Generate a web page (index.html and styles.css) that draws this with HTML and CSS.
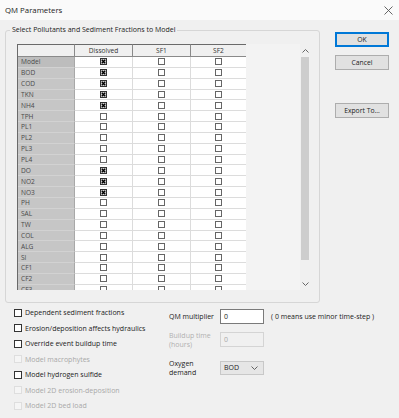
FILE: index.html
```html
<!DOCTYPE html>
<html>
<head>
<meta charset="utf-8">
<link rel="stylesheet" href="styles.css">
</head>
<body>
<div class="window">
  <div class="titlebar">
    <span class="title">QM Parameters</span>
    <svg class="close" width="9" height="9" viewBox="0 0 9 9"><path d="M0.5 0.5 L8.5 8.5 M8.5 0.5 L0.5 8.5" stroke="#555" stroke-width="0.9" fill="none"/></svg>
  </div>
  <div class="top">
    <fieldset class="group">
      <legend>Select Pollutants and Sediment Fractions to Model</legend>
      <div class="gridwrap">
        <div class="grid">
          <div class="hc corner"></div><div class="hc">Dissolved</div><div class="hc">SF1</div><div class="hc">SF2</div>
          <div class="rh sel">Model</div><div class="dc"><svg class="ck" width="7" height="7" viewBox="0 0 7 7"><rect x="0.5" y="0.5" width="6" height="6" fill="#d0d0d0" stroke="#333"/><path d="M1.8 1.8 L5.2 5.2 M5.2 1.8 L1.8 5.2" stroke="#000" stroke-width="1.4"/></svg></div><div class="dc"><span class="cb"></span></div><div class="dc"><span class="cb"></span></div>
          <div class="rh">BOD</div><div class="dc"><svg class="ck" width="7" height="7" viewBox="0 0 7 7"><rect x="0.5" y="0.5" width="6" height="6" fill="#d0d0d0" stroke="#333"/><path d="M1.8 1.8 L5.2 5.2 M5.2 1.8 L1.8 5.2" stroke="#000" stroke-width="1.4"/></svg></div><div class="dc"><span class="cb"></span></div><div class="dc"><span class="cb"></span></div>
          <div class="rh">COD</div><div class="dc"><svg class="ck" width="7" height="7" viewBox="0 0 7 7"><rect x="0.5" y="0.5" width="6" height="6" fill="#d0d0d0" stroke="#333"/><path d="M1.8 1.8 L5.2 5.2 M5.2 1.8 L1.8 5.2" stroke="#000" stroke-width="1.4"/></svg></div><div class="dc"><span class="cb"></span></div><div class="dc"><span class="cb"></span></div>
          <div class="rh">TKN</div><div class="dc"><svg class="ck" width="7" height="7" viewBox="0 0 7 7"><rect x="0.5" y="0.5" width="6" height="6" fill="#d0d0d0" stroke="#333"/><path d="M1.8 1.8 L5.2 5.2 M5.2 1.8 L1.8 5.2" stroke="#000" stroke-width="1.4"/></svg></div><div class="dc"><span class="cb"></span></div><div class="dc"><span class="cb"></span></div>
          <div class="rh">NH4</div><div class="dc"><svg class="ck" width="7" height="7" viewBox="0 0 7 7"><rect x="0.5" y="0.5" width="6" height="6" fill="#d0d0d0" stroke="#333"/><path d="M1.8 1.8 L5.2 5.2 M5.2 1.8 L1.8 5.2" stroke="#000" stroke-width="1.4"/></svg></div><div class="dc"><span class="cb"></span></div><div class="dc"><span class="cb"></span></div>
          <div class="rh">TPH</div><div class="dc"><span class="cb"></span></div><div class="dc"><span class="cb"></span></div><div class="dc"><span class="cb"></span></div>
          <div class="rh">PL1</div><div class="dc"><span class="cb"></span></div><div class="dc"><span class="cb"></span></div><div class="dc"><span class="cb"></span></div>
          <div class="rh">PL2</div><div class="dc"><span class="cb"></span></div><div class="dc"><span class="cb"></span></div><div class="dc"><span class="cb"></span></div>
          <div class="rh">PL3</div><div class="dc"><span class="cb"></span></div><div class="dc"><span class="cb"></span></div><div class="dc"><span class="cb"></span></div>
          <div class="rh">PL4</div><div class="dc"><span class="cb"></span></div><div class="dc"><span class="cb"></span></div><div class="dc"><span class="cb"></span></div>
          <div class="rh">DO</div><div class="dc"><svg class="ck" width="7" height="7" viewBox="0 0 7 7"><rect x="0.5" y="0.5" width="6" height="6" fill="#d0d0d0" stroke="#333"/><path d="M1.8 1.8 L5.2 5.2 M5.2 1.8 L1.8 5.2" stroke="#000" stroke-width="1.4"/></svg></div><div class="dc"><span class="cb"></span></div><div class="dc"><span class="cb"></span></div>
          <div class="rh">NO2</div><div class="dc"><svg class="ck" width="7" height="7" viewBox="0 0 7 7"><rect x="0.5" y="0.5" width="6" height="6" fill="#d0d0d0" stroke="#333"/><path d="M1.8 1.8 L5.2 5.2 M5.2 1.8 L1.8 5.2" stroke="#000" stroke-width="1.4"/></svg></div><div class="dc"><span class="cb"></span></div><div class="dc"><span class="cb"></span></div>
          <div class="rh">NO3</div><div class="dc"><svg class="ck" width="7" height="7" viewBox="0 0 7 7"><rect x="0.5" y="0.5" width="6" height="6" fill="#d0d0d0" stroke="#333"/><path d="M1.8 1.8 L5.2 5.2 M5.2 1.8 L1.8 5.2" stroke="#000" stroke-width="1.4"/></svg></div><div class="dc"><span class="cb"></span></div><div class="dc"><span class="cb"></span></div>
          <div class="rh">PH</div><div class="dc"><span class="cb"></span></div><div class="dc"><span class="cb"></span></div><div class="dc"><span class="cb"></span></div>
          <div class="rh">SAL</div><div class="dc"><span class="cb"></span></div><div class="dc"><span class="cb"></span></div><div class="dc"><span class="cb"></span></div>
          <div class="rh">TW</div><div class="dc"><span class="cb"></span></div><div class="dc"><span class="cb"></span></div><div class="dc"><span class="cb"></span></div>
          <div class="rh">COL</div><div class="dc"><span class="cb"></span></div><div class="dc"><span class="cb"></span></div><div class="dc"><span class="cb"></span></div>
          <div class="rh">ALG</div><div class="dc"><span class="cb"></span></div><div class="dc"><span class="cb"></span></div><div class="dc"><span class="cb"></span></div>
          <div class="rh">SI</div><div class="dc"><span class="cb"></span></div><div class="dc"><span class="cb"></span></div><div class="dc"><span class="cb"></span></div>
          <div class="rh">CF1</div><div class="dc"><span class="cb"></span></div><div class="dc"><span class="cb"></span></div><div class="dc"><span class="cb"></span></div>
          <div class="rh">CF2</div><div class="dc"><span class="cb"></span></div><div class="dc"><span class="cb"></span></div><div class="dc"><span class="cb"></span></div>
          <div class="rh">CF3</div><div class="dc"><span class="cb"></span></div><div class="dc"><span class="cb"></span></div><div class="dc"><span class="cb"></span></div>
        </div>
        <div class="blank"></div>
        <div class="scrollbar">
          <div class="sbtn"><svg width="7" height="4" viewBox="0 0 7 4"><path d="M0.5 3.5 L3.5 0.5 L6.5 3.5" stroke="#666" stroke-width="1" fill="none"/></svg></div>
          <div class="thumb"></div>
          <div class="track"></div>
          <div class="sbtn"><svg width="7" height="4" viewBox="0 0 7 4"><path d="M0.5 0.5 L3.5 3.5 L6.5 0.5" stroke="#666" stroke-width="1" fill="none"/></svg></div>
        </div>
      </div>
    </fieldset>
    <div class="buttons">
      <div class="btn default">OK</div>
      <div class="btn">Cancel</div>
      <div class="btn export">Export To...</div>
    </div>
  </div>
  <div class="bottom">
    <div class="checks">
      <div class="chk"><span class="box"></span>Dependent sediment fractions</div>
      <div class="chk"><span class="box"></span>Erosion/deposition affects hydraulics</div>
      <div class="chk"><span class="box"></span>Override event buildup time</div>
      <div class="chk dis"><span class="box"></span>Model macrophytes</div>
      <div class="chk"><span class="box"></span>Model hydrogen sulfide</div>
      <div class="chk dis"><span class="box"></span>Model 2D erosion-deposition</div>
      <div class="chk dis"><span class="box"></span>Model 2D bed load</div>
    </div>
    <div class="params">
      <div class="prow r1">
        <div class="plabel">QM multiplier</div>
        <div class="input">0</div>
        <div class="note">( 0 means use minor time-step )</div>
      </div>
      <div class="prow r2">
        <div class="plabel dis">Buildup time<br>(hours)</div>
        <div class="input dis">0</div>
      </div>
      <div class="prow r3">
        <div class="plabel">Oxygen<br>demand</div>
        <div class="combo"><span>BOD</span><svg width="7" height="4" viewBox="0 0 7 4"><path d="M0.5 0.5 L3.5 3.5 L6.5 0.5" stroke="#555" stroke-width="0.9" fill="none"/></svg></div>
      </div>
    </div>
  </div>
</div>
</body>
</html>
```

FILE: styles.css
```css
* { box-sizing: border-box; }
html, body { margin: 0; padding: 0; }
body {
  width: 399px;
  height: 418px;
  overflow: hidden;
  background: #f0f0f0;
  font-family: "Open Sans", "Noto Sans", sans-serif;
  font-size: 7px;
  color: #222;
}
.window { width: 399px; height: 418px; }

.titlebar {
  height: 20px;
  background: #fafafa;
  display: flex;
  align-items: center;
  justify-content: space-between;
  padding: 0 6px 0 5px;
}
.title { font-size: 7.8px; color: #222; }
.close { display: block; }

.top {
  display: flex;
  align-items: flex-start;
}
.group {
  margin: 5px 0 0 5px;
  width: 315px;
  border: 1px solid #d6d6d6;
  border-radius: 3px;
  padding: 9px 9px 12px 11px;
  min-width: 0;
}
.group legend {
  padding: 0 2px;
  margin-left: -7px;
  font-size: 7px;
  line-height: 10px;
  color: #222;
}

.gridwrap {
  display: flex;
  height: 246px;
  overflow: hidden;
}
.grid {
  display: grid;
  grid-template-columns: 57px 58px 58px 56px;
  grid-template-rows: 13px;
  grid-auto-rows: 10.85px;
  width: 229px;
  border-left: 1px solid #6a6a6a;
  background: #fff;
  align-content: start;
}
.hc {
  background: #f0f0f0;
  border-top: 1px solid #6a6a6a;
  border-right: 1px solid #8a8a8a;
  border-bottom: 1px solid #8a8a8a;
  display: flex;
  align-items: center;
  justify-content: center;
  font-size: 6.6px;
  color: #333;
}
.rh {
  background: #c6c6c6;
  border-right: 1px solid #a8a8a8;
  border-bottom: 1px solid #d2d2d2;
  display: flex;
  align-items: center;
  padding-left: 3px;
  font-size: 6.6px;
  color: #4a4a4a;
}
.rh.sel { background: #bdbdbd; }
.dc {
  background: #fff;
  border-right: 1px solid #dcdcdc;
  border-bottom: 1px solid #dcdcdc;
  display: flex;
  align-items: center;
  justify-content: center;
}
.cb {
  display: block;
  width: 7px;
  height: 7px;
  border: 1px solid #666;
  background: #fff;
}
.ck { display: block; }
.blank {
  width: 54px;
  background: #f3f3f3;
}
.scrollbar {
  width: 10px;
  display: flex;
  flex-direction: column;
  background: #f0f0f0;
}
.sbtn {
  height: 13px;
  display: flex;
  align-items: center;
  justify-content: center;
  flex: none;
}
.thumb {
  height: 203px;
  margin: 0 1px;
  background: #cdcdcd;
  flex: none;
}
.track { flex: 1; }

.buttons {
  margin: 12px 0 0 15px;
  width: 54px;
  display: flex;
  flex-direction: column;
}
.btn {
  height: 15px;
  border: 1px solid #adadad;
  background: #e1e1e1;
  display: flex;
  align-items: center;
  justify-content: center;
  font-size: 6.8px;
  color: #222;
  margin-bottom: 8px;
}
.btn.default {
  border: 1px solid #0078d7;
  box-shadow: inset 0 0 0 1px #0078d7;
}
.btn.export { margin-top: 25px; }

.bottom {
  display: flex;
  padding-top: 2px;
}
.checks {
  width: 155px;
  margin-left: 14px;
  display: flex;
  flex-direction: column;
}
.chk {
  height: 15.5px;
  display: flex;
  align-items: center;
  font-size: 7px;
  color: #222;
  white-space: nowrap;
}
.chk .box {
  width: 8px;
  height: 8px;
  border: 1px solid #333;
  background: #fff;
  margin-right: 3px;
  flex: none;
}
.chk.dis { color: #a8a8a8; }
.chk.dis .box { border-color: #dedede; background: #f5f5f5; }

.params {
  padding-top: 4px;
  display: flex;
  flex-direction: column;
}
.prow {
  display: flex;
  align-items: center;
}
.r1 { height: 15px; }
.r2 { height: 19px; margin-top: 6px; }
.r3 { height: 19px; margin-top: 9px; }
.plabel {
  width: 51px;
  font-size: 7px;
  line-height: 9px;
  color: #222;
  white-space: nowrap;
}
.plabel.dis { color: #b0b0b0; }
.input {
  width: 44px;
  height: 15px;
  border: 1px solid #7a7a7a;
  background: #fff;
  padding-left: 3px;
  display: flex;
  align-items: center;
  font-size: 7px;
}
.input.dis {
  border-color: #d4d4d4;
  background: #f0f0f0;
  color: #a8a8a8;
}
.note {
  margin-left: 7px;
  font-size: 7px;
  white-space: nowrap;
}
.combo {
  width: 44px;
  height: 14px;
  border: 1px solid #c8c8c8;
  background: #e6e6e6;
  display: flex;
  align-items: center;
  justify-content: space-between;
  padding: 0 5px 0 3px;
  font-size: 7px;
}
```
